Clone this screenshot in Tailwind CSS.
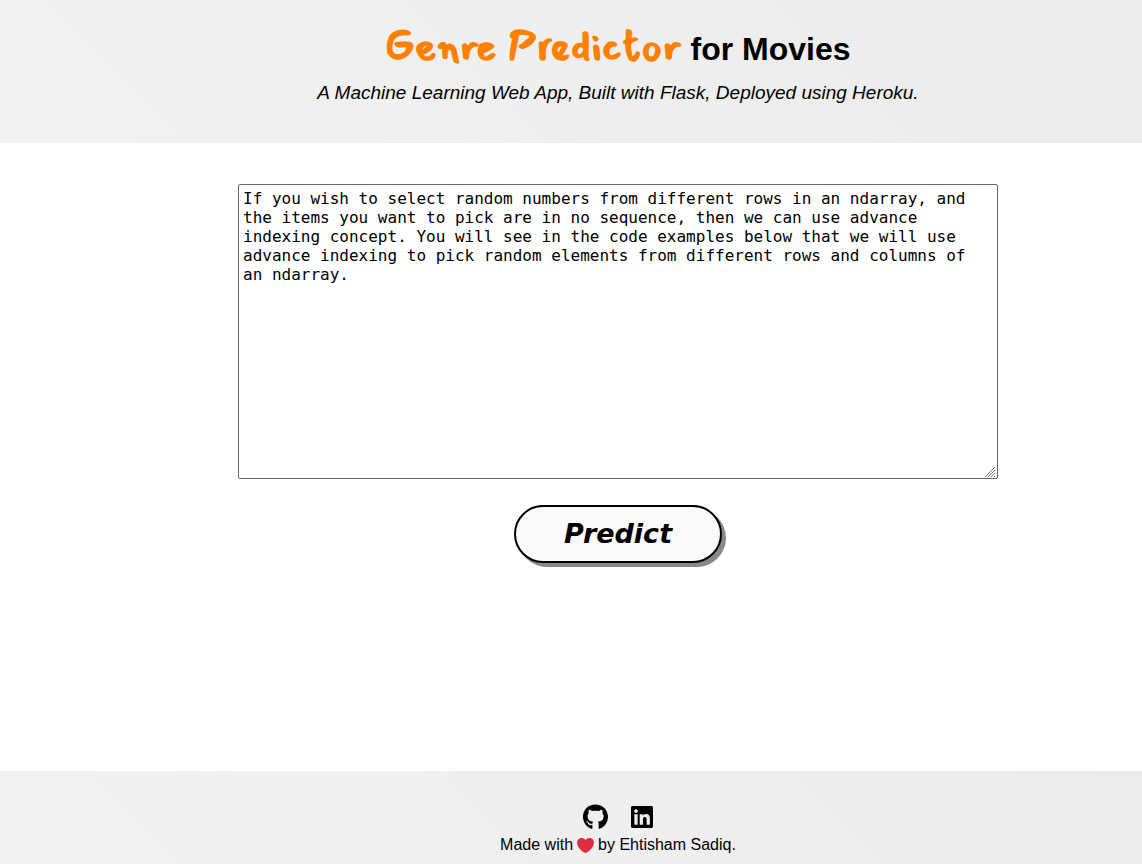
<!DOCTYPE html>
<html lang="en">
<head>
<meta charset="utf-8">
<meta name="viewport" content="width=device-width, initial-scale=1">
<title>Genre Predictor for Movies</title>
<script src="https://cdn.jsdelivr.net/npm/@tailwindcss/browser@4"></script>
</head>
<body class="flex min-h-screen flex-col bg-white font-['Liberation_Sans',Arial,sans-serif] text-black">
  <header class="bg-[linear-gradient(45deg,#f2f2f2,#ebebeb)] pt-[27px] pb-9 pl-[94px] text-center">
    <h1 class="text-[32px] leading-[44px] font-bold"><span class="font-['Mansalva','Lato',sans-serif] text-[42px] leading-5 text-[#ff8000]">Genre Predictor</span> for Movies</h1>
    <p class="mt-2 text-[19px] leading-7 italic">A Machine Learning Web App, Built with Flask, Deployed using Heroku.</p>
  </header>

  <main class="flex grow flex-col items-center pt-[41px] pl-[94px]">
    <form class="flex w-full max-w-[760px] flex-col items-center gap-[26px]" onsubmit="return false">
      <div class="relative w-full">
        <textarea aria-label="Movie description" rows="15" spellcheck="false" class="block w-full rounded-xs border border-[#67676f] bg-white p-1 font-['DejaVu_Sans_Mono',monospace] text-base leading-[19px]">If you wish to select random numbers from different rows in an ndarray, and the items you want to pick are in no sequence, then we can use advance indexing concept. You will see in the code examples below that we will use advance indexing to pick random elements from different rows and columns of an ndarray.</textarea>
        <svg class="pointer-events-none absolute right-[2px] bottom-[2px] size-[11px] bg-white" viewBox="0 0 11 11" fill="none" stroke="#777" aria-hidden="true"><path d="M0 11 10 1M3 11l7-7M6 11l4-4M9 11l1-1"/></svg>
      </div>
      <button type="submit" class="rounded-full border-2 border-black bg-[#f9f9f9] px-12 py-3 font-['DejaVu_Sans',sans-serif] text-[27px] leading-[30px] font-bold italic shadow-[4px_4px_0_#888888]">Predict</button>
    </form>
  </main>

  <footer class="bg-[linear-gradient(45deg,#f2f2f2,#ebebeb)] pt-[33px] pb-2 pl-[94px] text-center">
    <div class="flex items-center justify-center gap-[23px]">
      <a href="#" aria-label="GitHub"><svg class="h-[26px] w-[25px]" viewBox="0 0 496 512" fill="currentColor" aria-hidden="true"><path d="M165.900 397.400c0 2-2.300 3.600-5.200 3.600-3.300.3-5.600-1.300-5.600-3.600 0-2 2.300-3.600 5.200-3.600 3-.3 5.600 1.300 5.600 3.600zm-31.100-4.500c-.7 2 1.300 4.300 4.300 4.900 2.600 1 5.600 0 6.200-2s-1.300-4.300-4.300-5.200c-2.600-.7-5.500.3-6.200 2.300zm44.200-1.700c-2.900.7-4.900 2.600-4.600 4.900.3 2 2.900 3.300 5.900 2.600 2.900-.7 4.900-2.600 4.600-4.600-.3-1.900-3-3.200-5.900-2.900zM244.800 8C106.100 8 0 113.300 0 252c0 110.900 69.800 205.800 169.500 239.200 12.800 2.300 17.300-5.600 17.300-12.100 0-6.200-.3-40.400-.3-61.400 0 0-70 15-84.700-29.800 0 0-11.400-29.100-27.800-36.600 0 0-22.900-15.700 1.600-15.400 0 0 24.900 2 38.600 25.800 21.900 38.600 58.600 27.500 72.900 20.900 2.300-16 8.800-27.100 16-33.700-55.900-6.200-112.300-14.300-112.300-110.500 0-27.500 7.600-41.300 23.600-58.900-2.600-6.500-11.100-33.300 2.600-67.900 20.900-6.500 69 27 69 27 20-5.600 41.500-8.500 62.800-8.500s42.800 2.900 62.800 8.500c0 0 48.100-33.600 69-27 13.700 34.700 5.200 61.400 2.600 67.900 16 17.700 25.800 31.500 25.800 58.900 0 96.500-58.900 104.200-114.800 110.500 9.200 7.900 17 22.900 17 46.400 0 33.700-.3 75.400-.3 83.600 0 6.500 4.600 14.400 17.300 12.100C428.200 457.800 496 362.900 496 252 496 113.300 383.500 8 244.800 8zM97.200 352.900c-1.300 1-1 3.300.7 5.200 1.600 1.600 3.900 2.300 5.200 1 1.300-1 1-3.300-.7-5.200-1.600-1.600-3.900-2.300-5.200-1zm-10.800-8.100c-.7 1.300.3 2.900 2.300 3.900 1.600 1 3.600.7 4.300-.7.7-1.300-.3-2.900-2.300-3.900-2-.6-3.600-.3-4.300.7zm32.400 35.600c-1.600 1.300-1 4.300 1.300 6.200 2.300 2.300 5.200 2.600 6.500 1 1.300-1.300.7-4.300-1.300-6.200-2.200-2.300-5.200-2.600-6.500-1zm-11.400-14.700c-1.600 1-1.600 3.600 0 5.900 1.600 2.300 4.300 3.300 5.600 2.300 1.600-1.300 1.600-3.900 0-6.200-1.400-2.300-4-3.300-5.600-2z"/></svg></a>
      <a href="#" aria-label="LinkedIn"><svg class="h-[26px] w-[22px]" viewBox="0 0 448 512" fill="currentColor" aria-hidden="true"><path d="M416 32H31.900C14.300 32 0 46.500 0 64.300v383.400C0 465.500 14.300 480 31.900 480H416c17.600 0 32-14.500 32-32.300V64.300c0-17.800-14.400-32.300-32-32.300zM135.400 416H69V202.200h66.500V416zm-33.200-243c-21.300 0-38.500-17.300-38.500-38.500S80.900 96 102.200 96c21.200 0 38.500 17.300 38.500 38.500 0 21.300-17.200 38.500-38.500 38.500zm282.100 243h-66.400V312c0-24.800-.5-56.700-34.500-56.700-34.600 0-39.900 27-39.900 54.900V416h-66.400V202.200h63.700v29.200h.9c8.900-16.800 30.600-34.500 62.900-34.500 67.200 0 79.700 44.300 79.700 101.900V416z"/></svg></a>
    </div>
    <p class="mt-1 flex items-center justify-center gap-1 text-base leading-[22px]"><span>Made with</span><svg class="size-[17px]" viewBox="0 0 36 36" role="img" aria-label="love"><path fill="#DD2E44" d="M35.885 11.833c0-5.450-4.418-9.868-9.867-9.868-3.308 0-6.227 1.633-8.018 4.129-1.791-2.496-4.710-4.129-8.017-4.129-5.450 0-9.868 4.417-9.868 9.868 0 .772.098 1.520.266 2.241C1.751 22.587 11.216 31.568 18 34.034c6.783-2.466 16.249-11.447 17.617-19.959.170-.721.268-1.469.268-2.242z"/></svg><span>by Ehtisham Sadiq.</span></p>
  </footer>
</body>
</html>
